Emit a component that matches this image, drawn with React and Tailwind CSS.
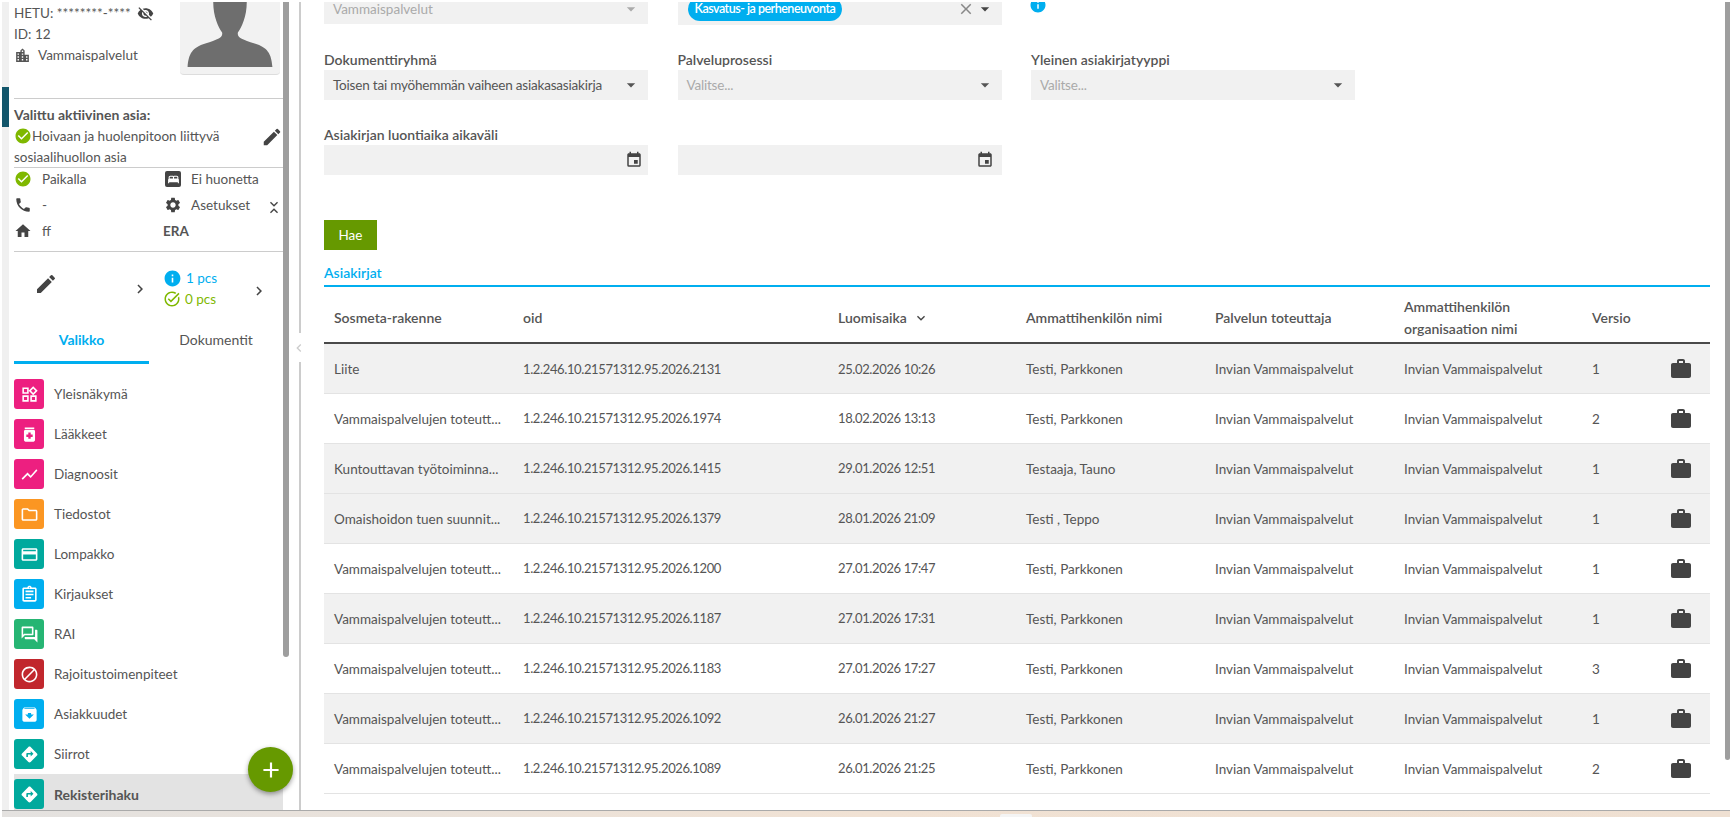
import {
  MdVisibilityOff, MdLocationCity, MdCheckCircle, MdEdit, MdBed, MdPhone, MdSettings, MdHome, MdInfo,
  MdChevronRight, MdChevronLeft, MdExpandMore, MdExpandLess, MdOutlineWidgets, MdMedication, MdShowChart,
  MdOutlineFolder, MdOutlineCreditCard, MdOutlineAssignment, MdOutlineForum, MdOutlineBlock, MdArchive,
  MdDirections, MdWork, MdEvent, MdArrowDropDown, MdClose, MdTaskAlt, MdAdd,
} from 'react-icons/md';

const menu = [
  { name: 'Yleisnäkymä', icon: MdOutlineWidgets, bg: 'bg-[#ed1f80]' },
  { name: 'Lääkkeet', icon: MdMedication, bg: 'bg-[#ed1f80]' },
  { name: 'Diagnoosit', icon: MdShowChart, bg: 'bg-[#ed1f80]' },
  { name: 'Tiedostot', icon: MdOutlineFolder, bg: 'bg-[#fb9622]' },
  { name: 'Lompakko', icon: MdOutlineCreditCard, bg: 'bg-[#00a99d]' },
  { name: 'Kirjaukset', icon: MdOutlineAssignment, bg: 'bg-[#00aeef]' },
  { name: 'RAI', icon: MdOutlineForum, bg: 'bg-[#26b573]' },
  { name: 'Rajoitustoimenpiteet', icon: MdOutlineBlock, bg: 'bg-[#c1272d]' },
  { name: 'Asiakkuudet', icon: MdArchive, bg: 'bg-[#00aeef]' },
  { name: 'Siirrot', icon: MdDirections, bg: 'bg-[#00a99d]' },
  { name: 'Rekisterihaku', icon: MdDirections, bg: 'bg-[#00a99d]', active: true },
];

const VP = 'Vammaispalvelujen toteutt...';
const PK = 'Testi, Parkkonen';
const rows = [
  { name: 'Liite', oid: '2131', date: '25.02.2026 10:26', person: PK, version: '1', gray: true },
  { name: VP, oid: '1974', date: '18.02.2026 13:13', person: PK, version: '2' },
  { name: 'Kuntouttavan työtoiminna...', oid: '1415', date: '29.01.2026 12:51', person: 'Testaaja, Tauno', version: '1', gray: true },
  { name: 'Omaishoidon tuen suunnit...', oid: '1379', date: '28.01.2026 21:09', person: 'Testi , Teppo', version: '1', gray: true },
  { name: VP, oid: '1200', date: '27.01.2026 17:47', person: PK, version: '1' },
  { name: VP, oid: '1187', date: '27.01.2026 17:31', person: PK, version: '1', gray: true },
  { name: VP, oid: '1183', date: '27.01.2026 17:27', person: PK, version: '3' },
  { name: VP, oid: '1092', date: '26.01.2026 21:27', person: PK, version: '1', gray: true },
  { name: VP, oid: '1089', date: '26.01.2026 21:25', person: PK, version: '2' },
];

function Sidebar() {
  return (
    <div className="relative w-[297px] shrink-0 h-full flex overflow-hidden text-[13.5px]">
      <div className="w-[7px] shrink-0 bg-[#f0f0f0]">
        <div className="mt-[85px] h-[40px] bg-[#13566b]" />
      </div>
      <div className="w-[274px] shrink-0 pl-[5px]">
        <div className="h-[97px] border-b border-[#ccc] flex justify-between">
          <div className="leading-[21px] pt-[1px]">
            <div className="flex items-center gap-[6px]">HETU: ********-**** <MdVisibilityOff className="text-[#444] text-[17px]" /></div>
            <div>ID: 12</div>
            <div className="flex items-center gap-[7px]"><MdLocationCity className="text-[#555] text-[17px]" /> Vammaispalvelut</div>
          </div>
          <div className="w-[100px] h-[73px] shrink-0 mr-[3px] bg-[#f2f2f2] rounded-b-[4px] border-b border-[#ddd]">
            <svg viewBox="0 0 100 73" className="w-full h-full">
              <path fill="#6e6e6e" d="M33 0C33 15 38 25 42 31C43 36 38 38 25 42C12 46 8 52 7 66L93 66C92 52 88 46 75 42C62 38 57 36 58 31C62 25 67 15 67 0Z" />
            </svg>
          </div>
        </div>
        <div className="h-[69px] pt-[5px] border-b border-[#ccc] leading-[21px] flex items-center justify-between">
          <div className="self-start">
            <div className="font-bold text-[14px]">Valittu aktiivinen asia:</div>
            <div className="pt-[1px]"><MdCheckCircle className="inline text-[#7fb800] text-[18px] align-[-4px]" />Hoivaan ja huolenpitoon liittyvä</div>
            <div>sosiaalihuollon asia</div>
          </div>
          <MdEdit className="text-[#444] text-[22px] mt-[2px]" />
        </div>
        <div className="h-[84px] border-b border-[#ccc] leading-[20px]">
          <div className="grid grid-cols-[149px_1fr]">
            <div className="flex items-center gap-[10px] h-[20px] mt-[1px]"><MdCheckCircle className="text-[#7fb800] text-[18px]" />Paikalla</div>
            <div className="flex items-center gap-[10px] h-[20px] mt-[1px] pl-[2px]">
              <span className="w-[16px] h-[16px] rounded-[2px] bg-[#444] flex items-center justify-center"><MdBed className="text-white text-[13px]" /></span>
              Ei huonetta
            </div>
            <div className="flex items-center gap-[10px] h-[20px] mt-[6px]"><MdPhone className="text-[#444] text-[18px]" />-</div>
            <div className="flex items-center h-[20px] mt-[6px] pl-[1px]">
              <MdSettings className="text-[#444] text-[18px]" />
              <span className="ml-[9px] flex-1">Asetukset</span>
              <span className="flex flex-col items-center mr-[1px] -space-y-[9px] mt-[4px]">
                <MdExpandMore className="text-[#444] text-[16px]" />
                <MdExpandLess className="text-[#444] text-[16px]" />
              </span>
            </div>
            <div className="flex items-center gap-[10px] h-[20px] mt-[6px]"><MdHome className="text-[#444] text-[18px]" />ff</div>
            <div className="flex items-center h-[20px] mt-[6px] font-bold">ERA</div>
          </div>
        </div>
        <div className="h-[67px] pt-[6px] flex items-center">
          <div className="w-[149px] flex items-center">
            <MdEdit className="text-[#444] text-[24px] ml-[20px] -mt-[10px]" />
            <MdChevronRight className="text-[#444] text-[18px] ml-[73px]" />
          </div>
          <div className="leading-[21px] w-[89px]">
            <div className="flex items-center gap-[4px] text-[#00aeef]"><MdInfo className="text-[19px]" />1 pcs</div>
            <div className="flex items-center gap-[4px] text-[#7fb800]"><MdTaskAlt className="text-[18px]" />0 pcs</div>
          </div>
          <MdChevronRight className="text-[#444] text-[18px] -ml-[2px] mt-[5px]" />
        </div>
        <div className="h-[45px] flex text-center text-[14px]">
          <div className="w-[135px] border-b-[3px] border-[#00aeef] text-[#00aeef] font-bold pt-[10px]">Valikko</div>
          <div className="flex-1 pt-[10px]">Dokumentit</div>
        </div>
        <div className="pt-[10px]">
          {menu.map((m) => (
            <div key={m.name} className={`flex items-center h-[40px] ${m.active ? 'bg-[#e3e3e3] font-bold text-[14px]' : ''}`}>
              <span className={`w-[30px] h-[30px] rounded-[3px] ${m.bg} flex items-center justify-center`}>
                <m.icon className="text-white text-[19px]" />
              </span>
              <span className="ml-[10px] pt-[1px]">{m.name}</span>
            </div>
          ))}
        </div>
      </div>
      <div className="w-[6px] h-[655px] bg-[#9e9e9e] rounded-b-[3px] shrink-0" />
      <button className="absolute left-[246px] top-[745px] w-[45px] h-[45px] rounded-full bg-[#669900] text-white flex items-center justify-center shadow-[0_2px_5px_rgba(0,0,0,0.4)]">
        <MdAdd className="text-[26px]" />
      </button>
    </div>
  );
}

function Field({ label, value, placeholder, date }) {
  return (
    <div>
      <div className="h-[20px] leading-[20px] font-semibold text-[14px]">{label}</div>
      <div className="h-[30px] bg-[#f1f1f1] flex items-center justify-between pl-[9px] pr-[9px]">
        <span className={`whitespace-nowrap tracking-[-0.2px] ${placeholder ? 'text-[#aaa]' : ''}`}>{value || placeholder}</span>
        {date ? <MdEvent className="text-[#444] text-[18px] ml-auto -mr-[4px]" /> : <MdArrowDropDown className="text-[#555] text-[20px] -mr-[2px]" />}
      </div>
    </div>
  );
}

function Main() {
  return (
    <div className="relative flex-1 h-full overflow-hidden border-l-2 border-[#ccc] pl-[23px] pr-[20px] text-[13.5px]">
      <div className="-mt-[8px]">
        <div className="grid grid-cols-[324px_324px_324px] gap-x-[29.5px] gap-y-[25px]">
          <div className="h-[30px] bg-[#f1f1f1] flex items-center justify-between px-[9px] text-[#aaa]">
            <span>Vammaispalvelut</span>
            <MdArrowDropDown className="text-[#aaa] text-[20px] -mr-[2px]" />
          </div>
          <div className="h-[31px] bg-[#f1f1f1] flex items-center justify-between pl-[10px] pr-[7px]">
            <span className="h-[24px] px-[7px] rounded-full bg-[#00aeef] text-white font-semibold text-[12.5px] tracking-[-0.5px] leading-[24px] -mt-[1px]">Kasvatus- ja perheneuvonta</span>
            <span className="flex items-center -mt-[1px]">
              <MdClose className="text-[#888] text-[18px]" />
              <MdArrowDropDown className="text-[#444] text-[20px]" />
            </span>
          </div>
          <div className="pt-[2px] -ml-[2px]"><MdInfo className="text-[#00aeef] text-[18px]" /></div>
          <Field label="Dokumenttiryhmä" value="Toisen tai myöhemmän vaiheen asiakasasiakirja" />
          <Field label="Palveluprosessi" placeholder="Valitse..." />
          <Field label="Yleinen asiakirjatyyppi" placeholder="Valitse..." />
          <Field label="Asiakirjan luontiaika aikaväli" date />
          <div className="pt-[20px]">
            <div className="h-[30px] bg-[#f1f1f1] flex items-center justify-end pr-[8px]">
              <MdEvent className="text-[#444] text-[18px]" />
            </div>
          </div>
        </div>
        <button className="mt-[45px] block w-[53px] h-[30px] bg-[#669900] text-white">Hae</button>
        <div className="mt-[13px] h-[22px] leading-[20px] text-[#00aeef] font-semibold text-[14px]">Asiakirjat</div>
        <div className="h-[2px] bg-[#00aeef]" />
        <table className="w-full table-fixed border-collapse text-left">
          <colgroup>
            <col className="w-[189px]" />
            <col className="w-[315px]" />
            <col className="w-[188px]" />
            <col className="w-[189px]" />
            <col className="w-[189px]" />
            <col className="w-[188px]" />
            <col className="w-[78px]" />
            <col />
          </colgroup>
          <thead>
            <tr className="h-[56px] border-b-2 border-[#4a4a4a] leading-[22px] text-[14px]">
              <th className="px-[10px] pt-[7px] font-semibold">Sosmeta-rakenne</th>
              <th className="px-[10px] pt-[7px] font-semibold">oid</th>
              <th className="px-[10px] pt-[7px] font-semibold">
                <span className="flex items-center gap-[6px]">Luomisaika <MdExpandMore className="text-[#444] text-[16px]" /></span>
              </th>
              <th className="px-[10px] pt-[7px] font-semibold">Ammattihenkilön nimi</th>
              <th className="px-[10px] pt-[7px] font-semibold">Palvelun toteuttaja</th>
              <th className="px-[10px] pt-[7px] font-semibold">Ammattihenkilön organisaation nimi</th>
              <th className="px-[10px] pt-[7px] font-semibold">Versio</th>
              <th />
            </tr>
          </thead>
          <tbody>
            {rows.map((r) => (
              <tr key={r.oid} className={`h-[50px] border-b border-[#e3e3e3] ${r.gray ? 'bg-[#f1f1f1]' : 'bg-white'}`}>
                <td className="px-[10px] pt-[2px] whitespace-nowrap">{r.name}</td>
                <td className="px-[10px] pt-[2px] text-[13px] tracking-[-0.375px]">1.2.246.10.21571312.95.2026.{r.oid}</td>
                <td className="px-[10px] pt-[2px] text-[13px] tracking-[-0.375px]">{r.date}</td>
                <td className="px-[10px] pt-[2px]">{r.person}</td>
                <td className="px-[10px] pt-[2px]">Invian Vammaispalvelut</td>
                <td className="px-[10px] pt-[2px]">Invian Vammaispalvelut</td>
                <td className="px-[10px] pt-[2px]">{r.version}</td>
                <td><MdWork className="text-[#444] text-[24px] ml-[9px] mt-[1px]" /></td>
              </tr>
            ))}
          </tbody>
        </table>
      </div>
      <div className="absolute right-0 top-0 w-[5px] h-[758px] bg-[#9e9e9e] rounded-b-[3px]" />
    </div>
  );
}

export default function App() {
  return (
    <div className="h-screen flex flex-col overflow-hidden bg-white text-[#555] text-[14px] font-[Lato,sans-serif]">
      <div className="flex-1 min-h-0 flex pt-[2px] pl-[2px] relative">
        <Sidebar />
        <Main />
        <div className="absolute left-[291px] top-[333px] w-[16px] h-[29px] bg-white flex items-center justify-center">
          <MdChevronLeft className="text-[#ccc] text-[20px]" />
        </div>
      </div>
      <div className="relative h-[7px] ml-[2px] shrink-0 border-t border-[#aaa] bg-gradient-to-r from-[#e4e2e0] via-[#f1e2d4] to-[#efe0d2]">
        <div className="absolute left-[998px] bottom-0 w-[32px] h-[3px] bg-[#f4f4f4] rounded-t-[2px]" />
      </div>
    </div>
  );
}
